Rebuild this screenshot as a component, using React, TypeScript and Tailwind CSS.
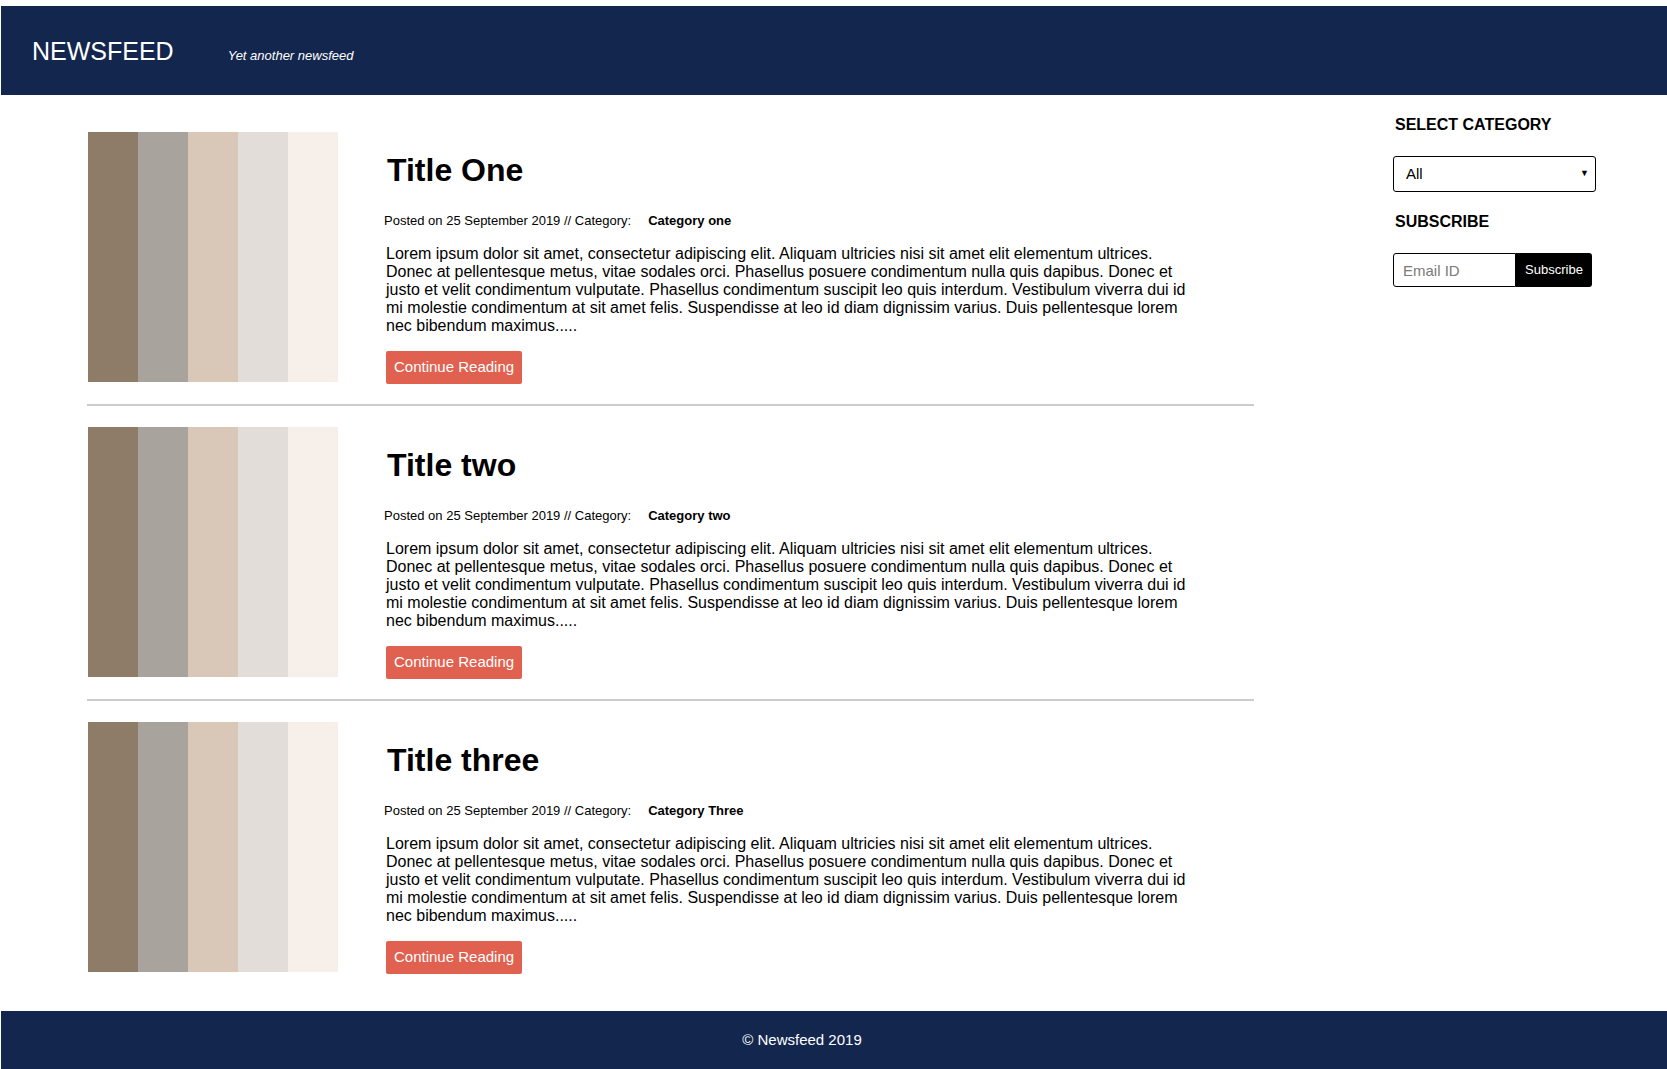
const posts = [
  { title: "Title One", category: "Category one" },
  { title: "Title two", category: "Category two" },
  { title: "Title three", category: "Category Three" },
];

const lorem =
  "Lorem ipsum dolor sit amet, consectetur adipiscing elit. Aliquam ultricies nisi sit amet elit elementum ultrices. Donec at pellentesque metus, vitae sodales orci. Phasellus posuere condimentum nulla quis dapibus. Donec et justo et velit condimentum vulputate. Phasellus condimentum suscipit leo quis interdum. Vestibulum viverra dui id mi molestie condimentum at sit amet felis. Suspendisse at leo id diam dignissim varius. Duis pellentesque lorem nec bibendum maximus.....";

const Swatch = () => (
  <div className="flex w-[250px] h-[250px] shrink-0 ml-px">
    <div className="w-[50px] bg-[#8e7b68]" />
    <div className="w-[50px] bg-[#a8a39c]" />
    <div className="w-[50px] bg-[#d9c8b7]" />
    <div className="w-[50px] bg-[#e2ddd9]" />
    <div className="w-[50px] bg-[#f7efe9]" />
  </div>
);

const Post = ({ title, category }: { title: string; category: string }) => (
  <article className="flex">
    <Swatch />
    <div className="ml-[48px] pt-[20px]">
      <h2 className="text-[32px] font-bold leading-[37px] text-black ml-px">{title}</h2>
      <p className="mt-[24px] text-[13px] leading-[16px] text-black -ml-[2px]">
        Posted on 25 September 2019 // Category:
        <span className="ml-[17px] font-bold">{category}</span>
      </p>
      <p className="mt-[16px] w-[808px] text-[16px] leading-[18px] text-black">{lorem}</p>
      <button className="mt-[16px] h-[33px] px-[8px] rounded-[2px] bg-[#e06150] text-white text-[15px]">
        Continue Reading
      </button>
    </div>
  </article>
);

export default function App() {
  return (
    <div className="min-h-screen bg-white font-['Liberation_Sans',Arial,sans-serif] pt-[6px]">
      <header className="ml-px h-[89px] bg-[#13264e] flex items-baseline pl-[31px] pt-[30px]">
        <h1 className="text-[25px] leading-[30px] text-white">NEWSFEED</h1>
        <span className="ml-[54px] text-[13px] italic text-white">Yet another newsfeed</span>
      </header>

      <main className="flex">
        <section className="ml-[87px] w-[1167px] pt-[37px] pb-[37px]">
          {posts.map((p, i) => (
            <div key={p.title}>
              {i > 0 && <hr className="mt-[20px] mb-[21px] border-0 h-[2px] bg-[#cccccc]" />}
              <Post title={p.title} category={p.category} />
            </div>
          ))}
        </section>

        <aside className="ml-[139px] w-[203px] pt-[21px]">
          <h3 className="ml-[2px] text-[16px] font-bold leading-[18px] text-black">SELECT CATEGORY</h3>
          <div className="mt-[22px] h-[36px] border border-black rounded-[3px] flex items-center justify-between pl-[12px] pr-[6px]">
            <span className="text-[15px] text-black">All</span>
            <span className="text-[9px] text-black">▼</span>
          </div>
          <h3 className="mt-[21px] ml-[2px] text-[16px] font-bold leading-[18px] text-black">SUBSCRIBE</h3>
          <div className="mt-[22px] flex h-[34px]">
            <input
              placeholder="Email ID"
              className="w-[123px] h-full border border-black rounded-l-[3px] pl-[9px] text-[15px] placeholder:text-[#7a7a7a] outline-none"
            />
            <button className="w-[76px] h-full bg-black text-white text-[13px] rounded-r-[3px]">Subscribe</button>
          </div>
        </aside>
      </main>

      <footer className="ml-px h-[59px] bg-[#13264e] flex items-center justify-center pr-[64px]">
        <span className="text-[15px] text-white">© Newsfeed 2019</span>
      </footer>
    </div>
  );
}
